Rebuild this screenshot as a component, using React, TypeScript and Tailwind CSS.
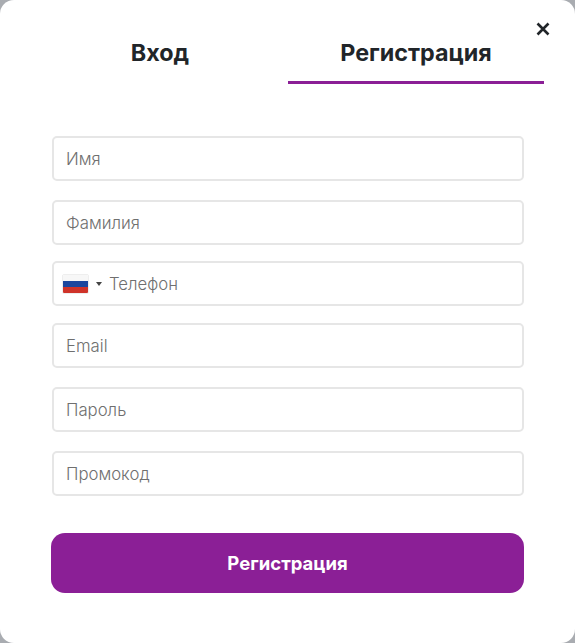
import React from "react";

function Field({ label, className }: { label: string; className: string }) {
  return (
    <div className={"flex h-[45px] w-[472px] items-center rounded-[5px] border-2 border-[#e6e6e6] bg-white pl-3 pt-[2px] text-[16.75px] font-light text-[#6f6f6f] " + className}>
      {label}
    </div>
  );
}

export default function App() {
  return (
    <div className="h-[643px] w-[575px] overflow-hidden bg-[#a9acb1] font-['Inter',sans-serif]">
      <div className="relative flex h-[643px] w-[575px] flex-col rounded-[14px] bg-white">
        <button className="absolute left-[535px] top-[21px] flex h-[16px] w-[16px] items-center justify-center text-[#212529]">
          <svg width="14" height="14" viewBox="0 0 14 14" fill="none" stroke="currentColor" strokeWidth="2.6">
            <path d="M1.5 1.5 12.5 12.5M12.5 1.5 1.5 12.5" />
          </svg>
        </button>
        <div className="ml-[32px] mt-[32px] flex h-[52px] w-[512px] text-[23.3px] font-bold text-[#212529]">
          <div className="flex h-full w-[256px] items-start justify-center leading-[41px]">Вход</div>
          <div className="flex h-full w-[256px] items-start justify-center border-b-[3px] border-[#8b1f96] leading-[41px]">Регистрация</div>
        </div>
        <div className="ml-[52px] mt-[52px] flex flex-col">
          <Field label="Имя" className="" />
          <Field label="Фамилия" className="mt-[19px]" />
          <div className="mt-[16px] flex h-[45px] w-[472px] items-center rounded-[5px] border-2 border-[#e6e6e6] bg-white pl-[8px] text-[16.75px] font-light text-[#6f6f6f]">
            <div className="flex h-[20px] w-[27px] flex-col overflow-hidden rounded-[2px] border border-[#eeeeee]">
              <div className="h-1/3 bg-[#f7f7f7]" />
              <div className="h-1/3 bg-[#1c479e]" />
              <div className="h-1/3 bg-[#cf3329]" />
            </div>
            <div className="ml-[7px] h-0 w-0 border-x-[3px] border-t-[4px] border-x-transparent border-t-[#444]" />
            <span className="ml-[7px] pt-[2px]">Телефон</span>
          </div>
          <Field label="Email" className="mt-[17px]" />
          <Field label="Пароль" className="mt-[19px]" />
          <Field label="Промокод" className="mt-[19px]" />
          <button className="ml-[-1px] mt-[37px] h-[60px] w-[473px] rounded-[14px] bg-[#8b1f96] pt-[2px] text-[18.5px] font-bold text-white">
            Регистрация
          </button>
        </div>
      </div>
    </div>
  );
}
